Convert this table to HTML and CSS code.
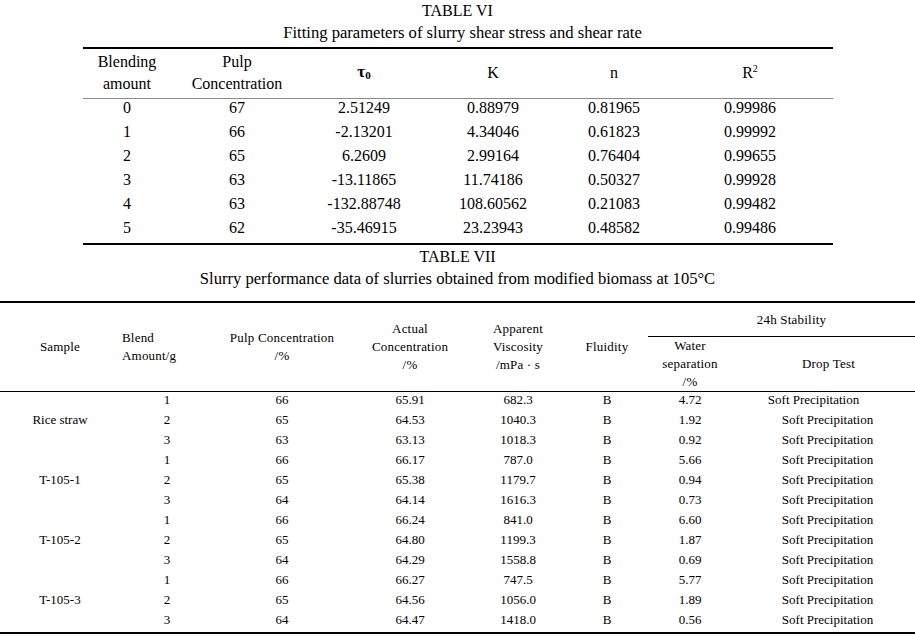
FILE: index.html
```html
<!DOCTYPE html>
<html>
<head>
<meta charset="utf-8">
<link rel="stylesheet" href="styles.css">
</head>
<body>
<section class="t6">
  <div class="cap">
    <div>TABLE VI</div>
    <div class="sub shift">Fitting parameters of slurry shear stress and shear rate</div>
  </div>
  <table class="fit">
    <colgroup>
      <col class="c1"><col class="c2"><col class="c3"><col class="c4"><col class="c5"><col class="c6">
    </colgroup>
    <thead>
      <tr>
        <th>Blending<br>amount</th>
        <th>Pulp<br>Concentration</th>
        <th><b class="tau">τ<sub>0</sub></b></th>
        <th>K</th>
        <th>n</th>
        <th>R<sup>2</sup></th>
      </tr>
    </thead>
    <tbody>
      <tr><td>0</td><td>67</td><td>2.51249</td><td>0.88979</td><td>0.81965</td><td>0.99986</td></tr>
      <tr><td>1</td><td>66</td><td>-2.13201</td><td>4.34046</td><td>0.61823</td><td>0.99992</td></tr>
      <tr><td>2</td><td>65</td><td>6.2609</td><td>2.99164</td><td>0.76404</td><td>0.99655</td></tr>
      <tr><td>3</td><td>63</td><td>-13.11865</td><td>11.74186</td><td>0.50327</td><td>0.99928</td></tr>
      <tr><td>4</td><td>63</td><td>-132.88748</td><td>108.60562</td><td>0.21083</td><td>0.99482</td></tr>
      <tr><td>5</td><td>62</td><td>-35.46915</td><td>23.23943</td><td>0.48582</td><td>0.99486</td></tr>
    </tbody>
  </table>
</section>

<section class="t7">
  <div class="cap cap7">
    <div>TABLE VII</div>
    <div class="sub">Slurry performance data of slurries obtained from modified biomass at 105°C</div>
  </div>
  <table class="perf">
    <colgroup>
      <col class="d1"><col class="d2"><col class="d3"><col class="d4"><col class="d5"><col class="d6"><col class="d7"><col class="d8">
    </colgroup>
    <thead>
      <tr class="h1">
        <th rowspan="2">Sample</th>
        <th rowspan="2" class="left">Blend<br>Amount/g</th>
        <th rowspan="2">Pulp Concentration<br>/%</th>
        <th rowspan="2">Actual<br>Concentration<br>/%</th>
        <th rowspan="2">Apparent<br>Viscosity<br>/mPa · s</th>
        <th rowspan="2">Fluidity</th>
        <th colspan="2" class="stab">24h Stability</th>
      </tr>
      <tr class="h2">
        <th>Water<br>separation<br>/%</th>
        <th class="drop">Drop Test</th>
      </tr>
    </thead>
    <tbody>
      <tr><td rowspan="3">Rice straw</td><td>1</td><td>66</td><td>65.91</td><td>682.3</td><td>B</td><td>4.72</td><td class="drop first">Soft Precipitation</td></tr>
      <tr><td>2</td><td>65</td><td>64.53</td><td>1040.3</td><td>B</td><td>1.92</td><td class="drop">Soft Precipitation</td></tr>
      <tr><td>3</td><td>63</td><td>63.13</td><td>1018.3</td><td>B</td><td>0.92</td><td class="drop">Soft Precipitation</td></tr>
      <tr><td rowspan="3">T-105-1</td><td>1</td><td>66</td><td>66.17</td><td>787.0</td><td>B</td><td>5.66</td><td class="drop">Soft Precipitation</td></tr>
      <tr><td>2</td><td>65</td><td>65.38</td><td>1179.7</td><td>B</td><td>0.94</td><td class="drop">Soft Precipitation</td></tr>
      <tr><td>3</td><td>64</td><td>64.14</td><td>1616.3</td><td>B</td><td>0.73</td><td class="drop">Soft Precipitation</td></tr>
      <tr><td rowspan="3">T-105-2</td><td>1</td><td>66</td><td>66.24</td><td>841.0</td><td>B</td><td>6.60</td><td class="drop">Soft Precipitation</td></tr>
      <tr><td>2</td><td>65</td><td>64.80</td><td>1199.3</td><td>B</td><td>1.87</td><td class="drop">Soft Precipitation</td></tr>
      <tr><td>3</td><td>64</td><td>64.29</td><td>1558.8</td><td>B</td><td>0.69</td><td class="drop">Soft Precipitation</td></tr>
      <tr><td rowspan="3">T-105-3</td><td>1</td><td>66</td><td>66.27</td><td>747.5</td><td>B</td><td>5.77</td><td class="drop">Soft Precipitation</td></tr>
      <tr><td>2</td><td>65</td><td>64.56</td><td>1056.0</td><td>B</td><td>1.89</td><td class="drop">Soft Precipitation</td></tr>
      <tr><td>3</td><td>64</td><td>64.47</td><td>1418.0</td><td>B</td><td>0.56</td><td class="drop">Soft Precipitation</td></tr>
    </tbody>
  </table>
</section>
</body>
</html>
```

FILE: styles.css
```css
html, body {
  margin: 0;
  padding: 0;
  background: #fff;
  color: #000;
  font-family: "Liberation Serif", "Times New Roman", serif;
}

.cap {
  text-align: center;
  font-size: 16px;
  line-height: 22px;
  margin-bottom: 3px;
}
.cap .sub { font-size: 16.6px; }
.cap .shift { padding-left: 10px; }

.fit {
  margin-left: 83px;
  width: 750px;
  border-collapse: collapse;
  table-layout: fixed;
  font-size: 16px;
  border-top: 2px solid #000;
  border-bottom: 2px solid #000;
}
.fit .c1 { width: 88px; }
.fit .c2 { width: 132px; }
.fit .c3 { width: 122px; }
.fit .c4 { width: 136px; }
.fit .c5 { width: 106px; }
.fit .c6 { width: 166px; }

.fit th {
  font-weight: normal;
  line-height: 22px;
  padding: 2px 0 3px;
  text-align: center;
  border-bottom: 1px solid #8a8a8a;
}
.fit td {
  text-align: center;
  padding: 0 0 6px;
  height: 17.8px;
  line-height: 18px;
}
.fit .tau { font-weight: bold; font-size: 17px; }
.fit .tau sub { font-size: 11px; vertical-align: -2px; }
.fit sup { font-size: 10px; vertical-align: 6px; line-height: 0; }

.cap7 {
  margin-top: 1px;
  margin-bottom: 11px;
}

.perf {
  width: 915px;
  border-collapse: collapse;
  table-layout: fixed;
  font-size: 13px;
  border-top: 2px solid #000;
  border-bottom: 2px solid #000;
}
.perf .d1 { width: 120px; }
.perf .d2 { width: 94px; }
.perf .d3 { width: 136px; }
.perf .d4 { width: 120px; }
.perf .d5 { width: 96px; }
.perf .d6 { width: 82px; }
.perf .d7 { width: 84px; }
.perf .d8 { width: 203px; }

.perf th {
  font-weight: normal;
  font-size: 13px;
  letter-spacing: 0.2px;
  line-height: 18px;
  padding: 0;
  text-align: center;
  vertical-align: middle;
}
.perf thead tr:last-child th,
.perf thead th[rowspan] {
  border-bottom: 1px solid #000;
}
.perf .h1 th.stab {
  height: 33px;
  border-bottom: 1px solid #000;
}
.perf .h2 th { height: 53px; }
.perf th.left { text-align: left; padding-left: 2px; }
.perf th.drop { padding-right: 10px; }

.perf td {
  text-align: center;
  height: 15.75px;
  line-height: 16px;
  padding: 0 0 4px;
  vertical-align: middle;
}
.perf td.drop { padding-right: 12px; }
.perf td.first { padding-right: 40px; }
```
